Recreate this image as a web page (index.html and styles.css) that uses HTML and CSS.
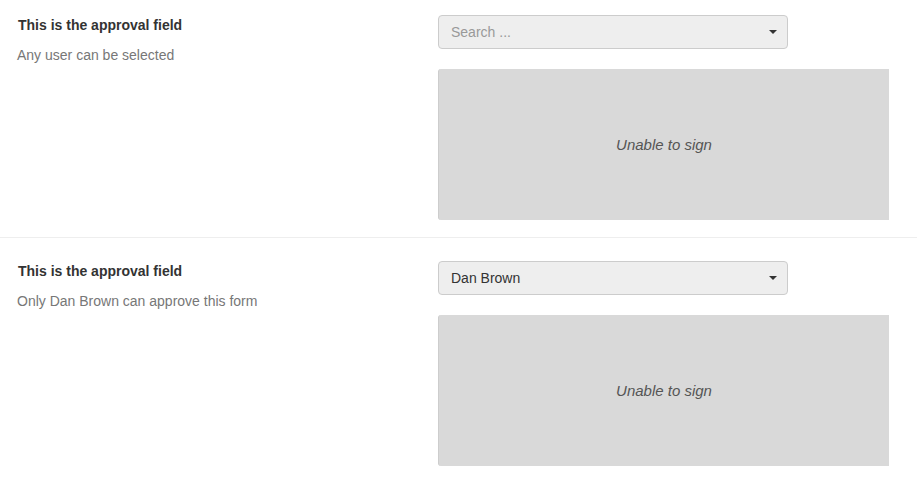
FILE: index.html
```html
<!DOCTYPE html>
<html>
<head>
<meta charset="utf-8">
<link rel="stylesheet" href="styles.css">
</head>
<body>
<div class="field">
  <div class="info">
    <div class="label">This is the approval field</div>
    <div class="desc">Any user can be selected</div>
  </div>
  <div class="control">
    <div class="select"><span class="placeholder">Search ...</span><span class="caret"></span></div>
    <div class="sign">Unable to sign</div>
  </div>
</div>
<div class="field">
  <div class="info">
    <div class="label">This is the approval field</div>
    <div class="desc">Only Dan Brown can approve this form</div>
  </div>
  <div class="control">
    <div class="select"><span class="value">Dan Brown</span><span class="caret"></span></div>
    <div class="sign">Unable to sign</div>
  </div>
</div>
</body>
</html>
```
FILE: styles.css
```css
html, body {
  margin: 0;
  padding: 0;
  background: #fff;
  font-family: "Liberation Sans", Arial, sans-serif;
  overflow: hidden;
}
.field {
  display: grid;
  grid-template-columns: 421px 451px;
  padding: 15px 0 17px 17px;
}
.field + .field {
  border-top: 1px solid #eee;
  padding-top: 23px;
}
.label {
  font-size: 14px;
  font-weight: bold;
  color: #333;
  line-height: 20px;
  padding-left: 1px;
}
.desc {
  margin-top: 10px;
  font-size: 14px;
  line-height: 20px;
  color: #777;
}
.control {
  display: flex;
  flex-direction: column;
}
.select {
  box-sizing: border-box;
  width: 350px;
  height: 34px;
  background: #eee;
  border: 1px solid #ccc;
  border-radius: 4px;
  display: flex;
  align-items: center;
  justify-content: space-between;
  padding: 0 10px 0 12px;
  font-size: 14px;
}
.placeholder { color: #999; }
.value { color: #333; }
.caret {
  width: 0;
  height: 0;
  border-left: 4px solid transparent;
  border-right: 4px solid transparent;
  border-top: 4px solid #333;
}
.sign {
  box-sizing: border-box;
  margin-top: 20px;
  width: 451px;
  height: 151px;
  background: #d9d9d9;
  border-left: 1px solid #cdcdcd;
  border-radius: 3px 0 0 3px;
  display: flex;
  align-items: center;
  justify-content: center;
  font-size: 15px;
  font-style: italic;
  color: #555;
}
```
